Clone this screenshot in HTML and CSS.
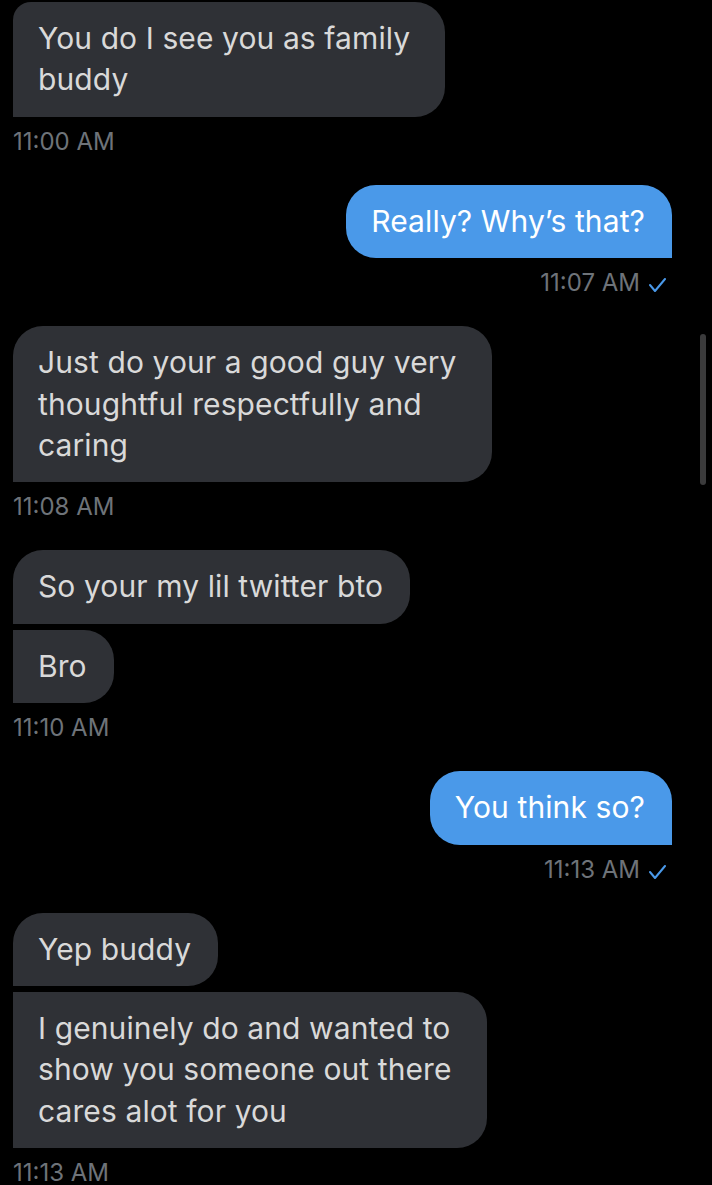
FILE: index.html
```html
<!DOCTYPE html>
<html lang="en">
<head>
<meta charset="utf-8">
<title>Messages</title>
<link rel="stylesheet" href="styles.css">
</head>
<body>
<main class="chat">
  <div class="group in first-group">
    <div class="bubble in multi solo top-small">You do I see you as family<br>buddy</div>
    <div class="ts">11:00 AM</div>
  </div>

  <div class="group out">
    <div class="bubble out">Really? Why’s that?</div>
    <div class="ts">11:07 AM <svg class="check" width="17" height="14" viewBox="0 0 17 14"><polyline points="1,7 6,13 16,1" fill="none" stroke="#4a99e9" stroke-width="2" stroke-linecap="round" stroke-linejoin="round"/></svg></div>
  </div>

  <div class="group in">
    <div class="bubble in multi">Just do your a good guy very<br>thoughtful respectfully and<br>caring</div>
    <div class="ts">11:08 AM</div>
  </div>

  <div class="group in">
    <div class="bubble in">So your my lil twitter bto</div>
    <div class="bubble in cont">Bro</div>
    <div class="ts">11:10 AM</div>
  </div>

  <div class="group out">
    <div class="bubble out">You think so?</div>
    <div class="ts">11:13 AM <svg class="check" width="17" height="14" viewBox="0 0 17 14"><polyline points="1,7 6,13 16,1" fill="none" stroke="#4a99e9" stroke-width="2" stroke-linecap="round" stroke-linejoin="round"/></svg></div>
  </div>

  <div class="group in">
    <div class="bubble in">Yep buddy</div>
    <div class="bubble in cont multi">I genuinely do and wanted to<br>show you someone out there<br>cares alot for you</div>
    <div class="ts">11:13 AM</div>
  </div>
</main>
<div class="scrollbar"></div>
</body>
</html>
```

FILE: styles.css
```css
html, body {
  margin: 0;
  padding: 0;
  background: #000;
}

body {
  font-family: Inter, "Liberation Sans", sans-serif;
  position: relative;
  min-height: 1185px;
  overflow: hidden;
}

.chat {
  display: flex;
  flex-direction: column;
  padding: 2px 40px 0 13px;
}

.group {
  display: flex;
  flex-direction: column;
  gap: 6px;
  margin-bottom: 31px;
}

.group.in {
  align-items: flex-start;
}

.group.out {
  align-items: flex-end;
}

.bubble {
  font-size: 30px;
  line-height: 41.4px;
  padding: 16px 27px 16px 25px;
  white-space: nowrap;
  border-radius: 30px;
  box-sizing: border-box;
  letter-spacing: 0.1px;
}

.bubble.multi {
  padding-right: 35px;
}

.bubble.in {
  background: #2f3136;
  color: #d9d9d9;
  border-bottom-left-radius: 0;
}

.bubble.in.top-small {
  border-top-left-radius: 18px;
}

.bubble.in.cont {
  border-top-left-radius: 0;
}

.bubble.out {
  background: #4a99e9;
  color: #fff;
  border-bottom-right-radius: 0;
}

.ts {
  font-size: 24px;
  line-height: 24px;
  color: #6e7379;
  margin-top: 7px;
  display: flex;
  align-items: center;
  gap: 9px;
}

.group.out .ts {
  margin-right: 6px;
}

.check {
  margin-top: 4px;
}

.scrollbar {
  position: absolute;
  left: 700px;
  top: 334px;
  width: 6px;
  height: 151px;
  border-radius: 3px;
  background: #3b3b3c;
}
```
